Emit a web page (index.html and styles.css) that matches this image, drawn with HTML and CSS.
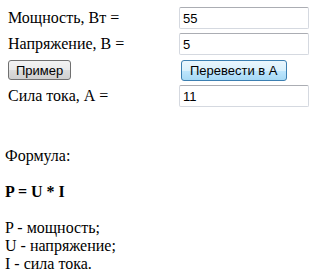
FILE: index.html
```html
<!DOCTYPE html>
<html lang="ru">
  <head>
    <meta charset="UTF-8" />
    <title>Сила тока</title>
    <link rel="stylesheet" href="styles.css">
  </head>
  <body>
    <div class="calc">
      <div class="label">Мощность, Вт =</div>
      <input type="text" class="field" id="power" value="55" />

      <div class="label">Напряжение, В =</div>
      <input type="text" class="field" id="voltage" value="5" />

      <div><button class="btn" id="example">Пример</button></div>
      <div><button class="btn btn-active" id="convert">Перевести в А</button></div>

      <div class="label">Сила тока, А =</div>
      <input type="text" class="field" id="current" value="11" />
    </div>

    <div class="formula">
      <div class="gap">Формула:</div>
      <div class="gap"><b>P = U * I</b></div>
      <div>P - мощность;</div>
      <div>U - напряжение;</div>
      <div>I - сила тока.</div>
    </div>
  </body>
</html>
```

FILE: styles.css
```css
body {
  font-family: "Liberation Serif", "Times New Roman", serif;
  font-size: 16px;
  color: #000;
  background-color: #fff;
  margin: 4px 0 0 5px;
}

.calc {
  display: grid;
  grid-template-columns: 167px 130px;
  grid-auto-rows: 22px;
  gap: 4px;
  padding: 3px;
  align-items: center;
}

.field {
  display: block;
  box-sizing: border-box;
  width: 130px;
  height: 22px;
  margin: 0;
  padding: 1px 3px 0;
  border: 1px solid #d5d9e0;
  border-top-color: #abadb3;
  border-radius: 2px;
  font-family: "Liberation Sans", Tahoma, sans-serif;
  font-size: 13px;
  color: #000;
  background: #fff;
}

.btn {
  display: block;
  box-sizing: border-box;
  height: 20px;
  margin: 0;
  padding: 0 7px;
  border: 1px solid #707070;
  border-radius: 3px;
  font-family: "Liberation Sans", Tahoma, sans-serif;
  font-size: 13px;
  color: #000;
  background: linear-gradient(#f2f2f2 0%, #ebebeb 50%, #dddddd 51%, #cfcfcf 100%);
}

.btn-active {
  height: 21px;
  margin-left: 2px;
  padding: 0 8px;
  border-color: #3c7fb1;
  background: linear-gradient(#eaf6fd 0%, #d9f0fc 50%, #bee6fd 51%, #a7d9f5 100%);
}

.formula {
  margin-top: 37px;
  line-height: 18px;
}

.gap {
  margin-bottom: 18px;
}
```
